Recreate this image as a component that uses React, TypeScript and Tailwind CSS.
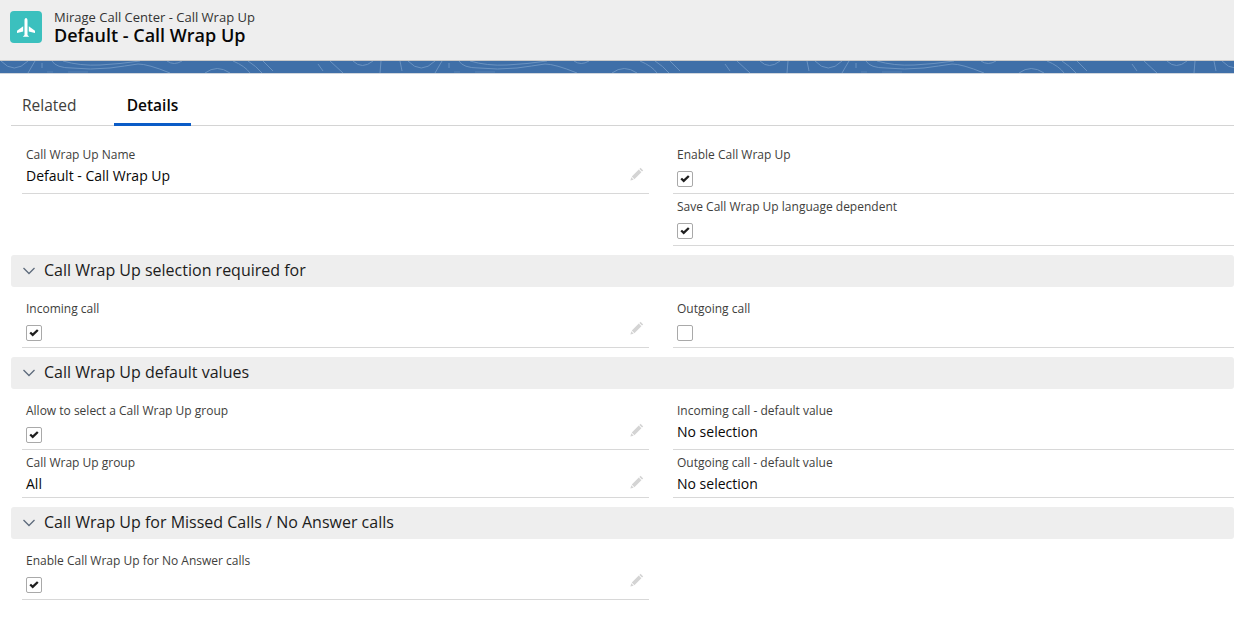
import React from "react";

function Pencil() {
  return (
    <svg width="14" height="14" viewBox="0 0 14 14" className="shrink-0">
      <path d="M10.6 0.8 L13.2 3.4 L12 4.6 L9.4 2 Z M8.8 2.6 L11.4 5.2 L4.4 12.2 L1.8 9.6 Z M1.3 10.3 L3.7 12.7 L0.4 13.6 Z" fill="#d4d4d4" />
    </svg>
  );
}

function Check({ on }: { on: boolean }) {
  return (
    <div className="flex h-4 w-4 items-center justify-center rounded-[2px] border border-[#a9a9a9] bg-white">
      {on && (
        <svg width="10" height="8" viewBox="0 0 10 8">
          <path d="M0.4 4.3 L2 2.7 L3.7 4.2 L8 0.2 L9.6 1.8 L3.7 7.6 Z" fill="#1f1f1f" />
        </svg>
      )}
    </div>
  );
}

function Field({
  label,
  value,
  check,
  edit,
}: {
  label: string;
  value?: string;
  check?: boolean;
  edit?: boolean;
}) {
  const isCheck = check !== undefined;
  return (
    <div className={`flex flex-col border-b border-[#d8d8d8] px-1 ${isCheck ? "min-h-[52px]" : "min-h-[48px]"}`}>
      <div className="mt-[4px] h-[18px] text-[12px] leading-[18px] text-[#3e3e3c]">{label}</div>
      <div className="flex items-center justify-between pr-[1px]">
        {isCheck ? (
          <div className="mt-[7px]">
            <Check on={check} />
          </div>
        ) : (
          <div className="mt-[1px] h-[22px] text-[14px] leading-[22px] text-[#080707]">{value}</div>
        )}
        {edit && (
          <div className="-mt-[3px]">
            <Pencil />
          </div>
        )}
      </div>
    </div>
  );
}

function Section({ title }: { title: string }) {
  return (
    <div className="my-[9px] ml-[11px] flex h-8 items-center rounded-[3px] bg-[#eeeeee]">
      <svg width="14" height="8" viewBox="0 0 14 8" className="ml-[11px]">
        <path d="M1.5 1 L7 6.5 L12.5 1" fill="none" stroke="#5e6b7c" strokeWidth="1.3" />
      </svg>
      <div className="ml-[8px] pb-[2px] text-[16px] leading-[30px] text-[#1c1c1c]">{title}</div>
    </div>
  );
}

function Row({ children }: { children: React.ReactNode }) {
  return <div className="grid grid-cols-[627px_561px] gap-x-6 pl-[22px]">{children}</div>;
}

function Contours() {
  return (
    <>
      <path d="M1 0 Q14 14 28 0" />
      <path d="M28 12 L35 0" />
      <path d="M42 2 V7" />
      <path d="M52 0 Q56 7 72 7 Q90 9 110 7 Q125 5 138 3 Q148 3 170 12" />
      <path d="M63 0 Q80 5 100 4 Q120 3 140 0" />
      <path d="M47 11 H53 M68 11 H88" opacity="0.5" />
      <path d="M167 0 Q174 5 182 0" />
      <path d="M205 12 Q217 3 230 12" />
      <path d="M233 0 Q245 5 250 12" />
      <path d="M248 0 Q256 5 262 12" />
      <path d="M263 0 L273 10" />
      <path d="M318 3 L323 10" />
      <path d="M330 0 L343 12" />
      <path d="M353 0 Q362 9 373 0" />
      <path d="M381 0 L380 12" />
      <path d="M400 0 L402 10" />
    </>
  );
}

function Banner() {
  const offsets = [0, 407, 814, 1221];
  return (
    <div className="h-[13px] w-full overflow-hidden border-b border-[#d0d5dc] bg-[#3f6fa8]">
      <svg width="1234" height="12" viewBox="0 0 1234 12" fill="none" stroke="#6b93c1" strokeWidth="1">
        {offsets.map((x) => (
          <g key={x} transform={`translate(${x} 0)`}>
            <Contours />
          </g>
        ))}
      </svg>
    </div>
  );
}

export default function App() {
  return (
    <div className="h-[617px] w-[1234px] overflow-hidden bg-white" style={{ fontFamily: '"Open Sans", sans-serif' }}>
      <div className="flex h-[61px] items-start border-b border-[#c9c9c9] bg-[#eeeeee] pl-[10px] pt-[11px]">
        <div className="flex h-8 w-8 items-center justify-center rounded bg-[#3bc0be]">
          <svg width="32" height="32" viewBox="0 0 32 32">
            <path d="M16 7 C16.9 7 17.5 8.2 17.5 9.5 V24 L19.2 25.8 H12.8 L14.5 24 V9.5 C14.5 8.2 15.1 7 16 7 Z" fill="#ffffff" />
            <path d="M13.2 15.2 L7 19.8 V22 L13.2 20.6 Z M18.8 15.2 L25 19.8 V22 L18.8 20.6 Z" fill="#ffffff" />
          </svg>
        </div>
        <div className="ml-3 -mt-[2px] flex flex-col">
          <div className="text-[13px] leading-[16px] text-[#333333]">Mirage Call Center - Call Wrap Up</div>
          <div className="text-[18px] font-semibold leading-[20px] text-[#080707]">Default - Call Wrap Up</div>
        </div>
      </div>
      <Banner />
      <div className="ml-[11px] flex h-[52px] items-end border-b border-[#d4d4d4]">
        <div className="flex h-[40px] w-[103px] items-center pl-[11px] pt-[2px] text-[15.5px] text-[#3e3e3c]">Related</div>
        <div className="-mb-px flex h-[40px] w-[77px] items-center justify-center border-b-[3px] border-[#0b5cc7] pt-[3px] text-[15.5px] font-semibold text-[#080707]">Details</div>
      </div>
      <div className="mt-4">
        <Row>
          <Field label="Call Wrap Up Name" value="Default - Call Wrap Up" edit />
          <Field label="Enable Call Wrap Up" check={true} />
          <div />
          <Field label="Save Call Wrap Up language dependent" check={true} />
        </Row>
        <Section title="Call Wrap Up selection required for" />
        <Row>
          <Field label="Incoming call" check={true} edit />
          <Field label="Outgoing call" check={false} />
        </Row>
        <Section title="Call Wrap Up default values" />
        <Row>
          <Field label="Allow to select a Call Wrap Up group" check={true} edit />
          <Field label="Incoming call - default value" value="No selection" />
          <Field label="Call Wrap Up group" value="All" edit />
          <Field label="Outgoing call - default value" value="No selection" />
        </Row>
        <Section title="Call Wrap Up for Missed Calls / No Answer calls" />
        <Row>
          <Field label="Enable Call Wrap Up for No Answer calls" check={true} edit />
          <div />
        </Row>
      </div>
    </div>
  );
}
